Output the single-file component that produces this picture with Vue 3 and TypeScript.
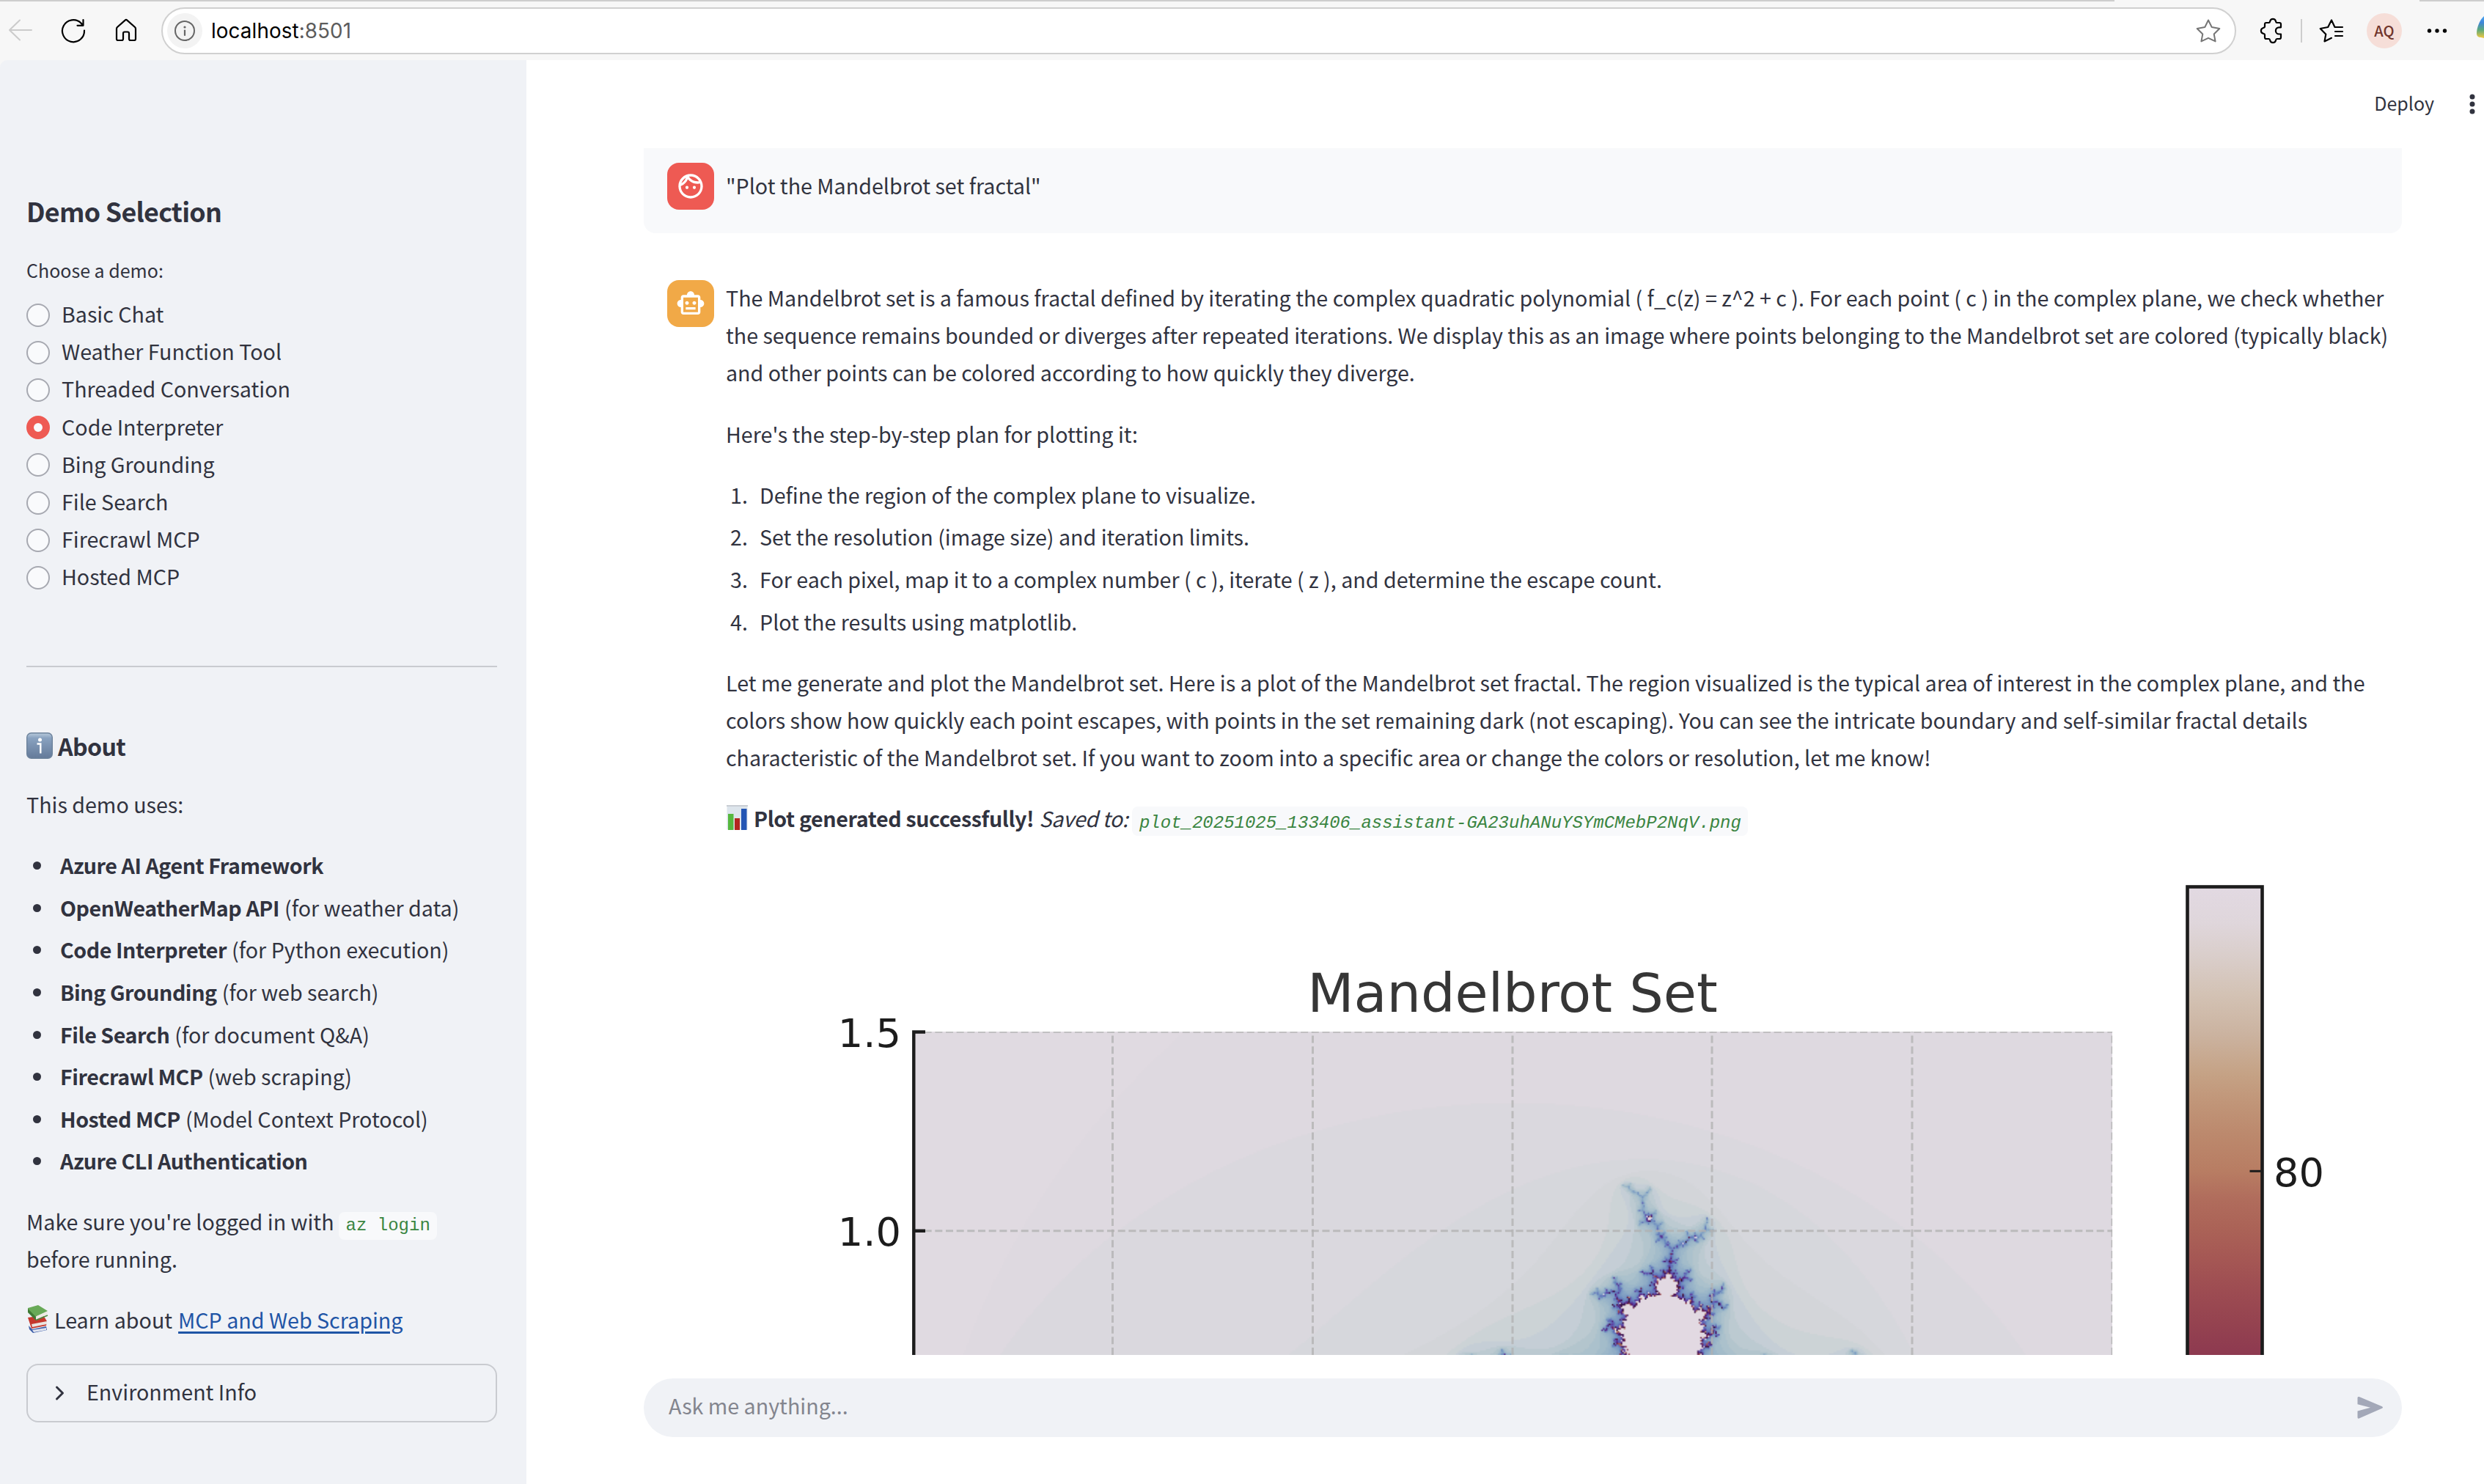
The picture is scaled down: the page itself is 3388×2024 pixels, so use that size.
<script setup lang="ts">
import { onMounted, ref } from 'vue'

interface Tool {
  name: string
  note: string
}

const demos: string[] = [
  'Basic Chat',
  'Weather Function Tool',
  'Threaded Conversation',
  'Code Interpreter',
  'Bing Grounding',
  'File Search',
  'Firecrawl MCP',
  'Hosted MCP',
]
const selected = ref('Code Interpreter')

const tools: Tool[] = [
  { name: 'Azure AI Agent Framework', note: '' },
  { name: 'OpenWeatherMap API', note: '(for weather data)' },
  { name: 'Code Interpreter', note: '(for Python execution)' },
  { name: 'Bing Grounding', note: '(for web search)' },
  { name: 'File Search', note: '(for document Q&A)' },
  { name: 'Firecrawl MCP', note: '(web scraping)' },
  { name: 'Hosted MCP', note: '(Model Context Protocol)' },
  { name: 'Azure CLI Authentication', note: '' },
]

const steps: string[] = [
  'Define the region of the complex plane to visualize.',
  'Set the resolution (image size) and iteration limits.',
  'For each pixel, map it to a complex number ( c ), iterate ( z ), and determine the escape count.',
  'Plot the results using matplotlib.',
]

/* Cyclic light-dark-light colormap, as [position, hex] stops */
const stops: [number, string][] = [
  [0, 'e2d9e2'], [0.01, 'e0dae1'], [0.02, 'ded9e0'], [0.03, 'dad8de'],
  [0.04, 'd6d7dc'], [0.05, 'd3d5d9'], [0.06, 'ccd3d6'], [0.07, 'c5ced6'],
  [0.08, 'bccad1'], [0.09, 'b3c5cd'], [0.111, 'a2bcca'], [0.16, '83a2c4'],
  [0.222, '6785be'], [0.28, '6066b5'], [0.333, '5e43a5'], [0.39, '552585'],
  [0.444, '421257'], [0.5, '2f1436'], [0.556, '471340'], [0.61, '701f4b'],
  [0.667, '8c3850'], [0.693, '954350'], [0.715, '9d4c52'], [0.7375, 'a55754'],
  [0.76, 'ab6357'], [0.779, 'b06c5c'], [0.8, 'b87d63'], [0.826, 'bc896d'],
  [0.849, 'c19679'], [0.868, 'c5a285'], [0.896, 'cbb3a0'], [0.924, 'd3c2b4'],
  [0.949, 'd9cdc9'], [0.974, 'dfd6db'], [1, 'e2d9e2'],
]

function channels(hex: string): number[] {
  return [0, 2, 4].map((i) => parseInt(hex.slice(i, i + 2), 16))
}

function colorAt(t: number): number[] {
  for (let i = 1; i < stops.length; i++) {
    if (t <= stops[i][0]) {
      const [a, from] = stops[i - 1]
      const [b, to] = stops[i]
      const k = (t - a) / (b - a)
      const p = channels(from)
      const q = channels(to)
      return p.map((v, j) => v + (q[j] - v) * k)
    }
  }
  return channels('e2d9e2')
}

const SIZE = 800
const ROWS = 216
const MAX_ITER = 100
const canvas = ref<HTMLCanvasElement | null>(null)

onMounted(() => {
  const ctx = canvas.value?.getContext('2d')
  if (!ctx) return
  const image = ctx.createImageData(SIZE, ROWS)
  const palette = Array.from({ length: MAX_ITER + 1 }, (_, n) => colorAt(n / MAX_ITER))
  for (let row = 0; row < ROWS; row++) {
    const ci = 1.5 - (3 * row) / (SIZE - 1)
    for (let col = 0; col < SIZE; col++) {
      const cr = -2 + (3 * col) / (SIZE - 1)
      let x = 0
      let y = 0
      let n = 0
      while (n < MAX_ITER && x * x + y * y <= 4) {
        const t = x * x - y * y + cr
        y = 2 * x * y + ci
        x = t
        n++
      }
      const [r, g, b] = palette[n]
      image.data.set([r, g, b, 255], (row * SIZE + col) * 4)
    }
  }
  ctx.putImageData(image, 0, 0)
})

const gridX: number[] = [1517.5, 1790.5, 2063, 2335, 2608]
const barStops: [number, string][] = stops
  .filter(([t]) => t >= 0.667)
  .map(([t, c]): [number, string] => [(1 - t) / 0.333, '#' + c])
  .reverse()
</script>

<template>
  <div class="window">
    <header class="toolbar">
      <svg class="nav" width="220" height="82" viewBox="0 0 220 82" fill="none">
        <g stroke="#cbcbcb" stroke-width="2" stroke-linecap="round" stroke-linejoin="round">
          <path d="M43 41H13M27 27.500L13 41L27 54.500" />
        </g>
        <g stroke="#000" stroke-width="2.200" stroke-linecap="round" stroke-linejoin="round">
          <path d="M115 41.500A15 15 0 1 1 110.500 31.500L113 34.500M113.500 27V34.800H105.500" />
          <path d="M170.600 27.600a2 2 0 0 1 2.800 0L184 37a3 3 0 0 1 1 2.200V53a2 2 0 0 1-2 2h-5a2 2 0 0 1-2-2v-7.500a2 2 0 0 0-2-2h-4a2 2 0 0 0-2 2V53a2 2 0 0 1-2 2h-5a2 2 0 0 1-2-2V39.200a3 3 0 0 1 1-2.200z" />
        </g>
      </svg>
      <div class="address">
        <span class="site-info">
          <svg width="48" height="48" viewBox="0 0 48 48" fill="none">
            <circle cx="24" cy="24" r="13" stroke="#666" stroke-width="2" />
            <path d="M24 23.500V30" stroke="#666" stroke-width="2.200" stroke-linecap="round" />
            <circle cx="24" cy="19" r="1.600" fill="#666" />
          </svg>
        </span>
        <span class="url">localhost<span class="port">:8501</span></span>
        <svg class="star" width="34" height="34" viewBox="2995 25 34 34" fill="none" stroke="#767676" stroke-width="2" stroke-linejoin="round">
          <path d="M3012 27.500L3016.700 37L3027.300 39L3019.700 46.500L3021.600 56.400L3012 51.800L3002.400 56.400L3004.300 46.500L2996.700 39L3007.300 37z" />
        </svg>
      </div>
      <svg class="actions" width="338" height="82" viewBox="3050 0 338 82" fill="none">
        <path d="M3091 31h3.500c1.500 0 1.500-1 1.700-2a4 4 0 0 1 7.800 0c.2 1 .2 2 1.700 2h3.300a2 2 0 0 1 2 2v4.300h-2.500a4.500 4.500 0 0 0 0 9.200h2.500V51a2 2 0 0 1-2 2h-3.300c-1.500 0-1.500 1-1.700 2a4 4 0 0 1-7.800 0c-.2-1-.2-2-1.700-2H3091a2 2 0 0 1-2-2v-3.500c0-1.500-1-1.500-2-1.700a4 4 0 0 1 0-7.800c1-.2 2-.2 2-1.700V33a2 2 0 0 1 2-2z" stroke="#000" stroke-width="2.200" stroke-linejoin="round" />
        <path d="M3139 26V58" stroke="#cdcdcd" stroke-width="2" />
        <g stroke="#000" stroke-width="2.200" stroke-linecap="round" stroke-linejoin="round">
          <path d="M3195 37H3184.500L3180 27.500L3175.200 37L3164.700 39L3172.300 46.800L3170.500 56.400L3180 51.800M3185 43H3195M3185 49H3195" />
        </g>
        <circle cx="3252" cy="42" r="24" fill="#f6ded8" />
        <text x="3252" y="49.500" text-anchor="middle" class="initials">AQ</text>
        <g fill="#000">
          <circle cx="3313.500" cy="42" r="2.700" />
          <circle cx="3324" cy="42" r="2.700" />
          <circle cx="3334.500" cy="42" r="2.700" />
        </g>
        <defs>
          <linearGradient id="assistantGlyph" x1="0" y1="0" x2="0" y2="1">
            <stop offset="0" stop-color="#4aa5f0" />
            <stop offset=".3" stop-color="#3f86d8" />
            <stop offset=".62" stop-color="#5ba97a" />
            <stop offset="1" stop-color="#f5c93f" />
          </linearGradient>
        </defs>
        <path d="M3388 22C3382 27 3378 38 3378 46Q3378 51 3384 51L3388 52z" fill="url(#assistantGlyph)" />
      </svg>
    </header>

    <div class="body">
      <aside class="sidebar">
        <h2>Demo Selection</h2>
        <div class="caption">Choose a demo:</div>
        <div class="radios">
          <label v-for="d in demos" :key="d" class="radio" @click="selected = d">
            <span class="dot" :class="{ on: d === selected }"></span>
            <span class="label">{{ d }}</span>
          </label>
        </div>
        <div class="rule"></div>
        <h3>
          <svg width="36" height="36" viewBox="0 0 36 36">
            <defs>
              <linearGradient id="infoTile" x1="0" y1="0" x2="0" y2="1">
                <stop offset="0" stop-color="#b9cbdc" />
                <stop offset=".2" stop-color="#89a2c0" />
                <stop offset="1" stop-color="#647a99" />
              </linearGradient>
            </defs>
            <rect x=".7" y=".7" width="34.600" height="34.600" rx="6" fill="url(#infoTile)" stroke="#6d839c" stroke-width="1.400" />
            <circle cx="18.500" cy="10" r="2.500" fill="#fff" />
            <path d="M14.500 15.500H19.300V28.500" fill="none" stroke="#fff" stroke-width="2.400" />
          </svg>
          <span>About</span>
        </h3>
        <p>This demo uses:</p>
        <ul class="tools">
          <li v-for="t in tools" :key="t.name"><b>{{ t.name }}</b> {{ t.note }}</li>
        </ul>
        <p>Make sure you're logged in with <code class="pale">az login</code><br />before running.</p>
        <p class="learn">
          <svg width="30" height="40" viewBox="0 0 30 40">
            <path d="M1 17L22 14L27 22L26 28L6 32z" fill="#c5372c" />
            <path d="M6 26L27 22L27 26L7 30z" fill="#e9e4e0" />
            <path d="M2 28L7 33L26 29L27 34L8 38L3 33z" fill="#3c5da8" />
            <path d="M7 34L26 31L26 34L9 37z" fill="#dfe3ee" />
            <path d="M1 4L15 0L28 8L11 16L1 8z" fill="#68a957" />
            <path d="M1 5L12 16L12 21L1 10z" fill="#3f7a35" />
            <path d="M12 15.500L28 8.500L27 13L12 20.500z" fill="#ece9e2" />
            <path d="M12 20.500L28 14" stroke="#4b8a3e" stroke-width="1.500" />
          </svg>
          Learn about <a>MCP and Web Scraping</a>
        </p>
        <div class="expander">
          <svg width="14" height="22" viewBox="0 0 14 22" fill="none" stroke="#31333f" stroke-width="3" stroke-linecap="round" stroke-linejoin="round">
            <path d="M2.500 3L10.500 11L2.500 19" />
          </svg>
          <span>Environment Info</span>
        </div>
      </aside>

      <main class="main">
        <div class="topline">
          <span>Deploy</span>
          <svg width="8" height="28" viewBox="0 0 8 28" fill="#31333f">
            <circle cx="4" cy="4" r="3.500" />
            <circle cx="4" cy="14" r="3.500" />
            <circle cx="4" cy="24" r="3.500" />
          </svg>
        </div>

        <section class="chat">
          <div class="message user">
            <span class="avatar red">
              <svg width="40" height="40" viewBox="0 0 24 24" fill="#fff">
                <path d="M10.250 13c0 .69-.56 1.250-1.250 1.250S7.750 13.690 7.750 13s.56-1.250 1.250-1.250 1.250.56 1.250 1.250zM15 11.750c-.69 0-1.250.56-1.250 1.250s.56 1.250 1.250 1.250 1.250-.56 1.250-1.250-.56-1.250-1.250-1.250zm7 .25c0 5.520-4.480 10-10 10S2 17.520 2 12 6.480 2 12 2s10 4.480 10 10zM10.660 4.120C12.060 6.440 14.600 8 17.500 8c.46 0 .91-.05 1.340-.12C17.440 5.560 14.900 4 12 4c-.46 0-.91.05-1.340.12zM4.420 9.470c1.710-.97 3.030-2.550 3.660-4.440C6.370 6 5.050 7.580 4.420 9.470zM20 12c0-.78-.12-1.530-.33-2.240-.7.15-1.420.24-2.170.24-3.130 0-5.920-1.440-7.760-3.690C8.690 8.870 6.600 10.880 4 11.860c.01.04 0 .09 0 .14 0 4.410 3.590 8 8 8s8-3.590 8-8z" />
              </svg>
            </span>
            <p>"Plot the Mandelbrot set fractal"</p>
          </div>

          <div class="message bot">
            <span class="avatar amber">
              <svg width="40" height="40" viewBox="0 0 24 24" fill="#fff">
                <path d="M20 9V7c0-1.100-.9-2-2-2h-3c0-1.660-1.340-3-3-3S9 3.340 9 5H6c-1.100 0-2 .9-2 2v2c-1.660 0-3 1.340-3 3s1.340 3 3 3v4c0 1.100.9 2 2 2h12c1.100 0 2-.9 2-2v-4c1.660 0 3-1.340 3-3s-1.340-3-3-3zm-2 10H6V7h12v12zm-9-6c-.83 0-1.500-.67-1.500-1.500S8.170 10 9 10s1.500.67 1.500 1.500S9.830 13 9 13zm7.500-1.500c0 .83-.67 1.500-1.500 1.500s-1.500-.67-1.500-1.500.67-1.500 1.500-1.500 1.500.67 1.500 1.500zM8 15h8v2H8v-2z" />
              </svg>
            </span>
            <div class="answer">
              <p>
                The Mandelbrot set is a famous fractal defined by iterating the complex quadratic polynomial ( f_c(z) = z^2 + c ). For each point ( c ) in the complex plane, we check whether<br />
                the sequence remains bounded or diverges after repeated iterations. We display this as an image where points belonging to the Mandelbrot set are colored (typically black)<br />
                and other points can be colored according to how quickly they diverge.
              </p>
              <p>Here's the step-by-step plan for plotting it:</p>
              <ol>
                <li v-for="(s, i) in steps" :key="i"><span class="num">{{ i + 1 }}.</span>{{ s }}</li>
              </ol>
              <p>
                Let me generate and plot the Mandelbrot set. Here is a plot of the Mandelbrot set fractal. The region visualized is the typical area of interest in the complex plane, and the<br />
                colors show how quickly each point escapes, with points in the set remaining dark (not escaping). You can see the intricate boundary and self-similar fractal details<br />
                characteristic of the Mandelbrot set. If you want to zoom into a specific area or change the colors or resolution, let me know!
              </p>
              <p class="saved">
                <svg width="29" height="34" viewBox="0 0 29 34">
                  <rect x=".5" y=".5" width="28" height="33" fill="#dde5ec" />
                  <rect x="0" y="0" width="29" height="2" fill="#c9ced4" />
                  <rect x="2" y="12" width="7.500" height="22" fill="#56b83f" />
                  <rect x="11" y="18" width="7" height="16" fill="#b3261f" />
                  <rect x="20" y="5" width="7.500" height="29" fill="#2456b4" />
                </svg>
                <b>Plot generated successfully!</b> <i>Saved to:</i>
                <code class="file">plot_20251025_133406_assistant-GA23uhANuYSYmCMebP2NqV.png</code>
              </p>
              <div class="figure">
                <canvas ref="canvas" :width="SIZE" :height="ROWS"></canvas>
                <svg width="2253" height="674" viewBox="991 1174 2253 674">
                  <defs>
                    <linearGradient id="bar" gradientUnits="userSpaceOnUse" x1="0" y1="1209" x2="0" y2="1854">
                      <stop v-for="([o, c], i) in barStops" :key="i" :offset="o" :stop-color="c" />
                    </linearGradient>
                  </defs>
                  <g stroke="#b0b0b0" stroke-opacity=".75" stroke-width="3" stroke-dasharray="10 4.670" fill="none">
                    <path v-for="x in gridX" :key="x" :d="`M${x} 1848V1407`" />
                    <path d="M1246 1678.800H2881" />
                    <path d="M1246 1407.800H2881M2880.300 1848V1407" stroke-width="1.700" />
                  </g>
                  <path d="M1246.300 1848V1407.500H1262M1246.300 1678.700H1262" fill="none" stroke="#1c1c1c" stroke-width="4.400" />
                  <rect x="2983.500" y="1209.500" width="102" height="700" fill="url(#bar)" stroke="#1c1c1c" stroke-width="4.600" />
                  <path d="M3068.500 1597.300H3084" stroke="#1c1c1c" stroke-width="3" />
                  <g class="plot-text">
                    <text x="2063" y="1380" text-anchor="middle" class="plot-title">Mandelbrot Set</text>
                    <text x="1229" y="1427.500" text-anchor="end">1.5</text>
                    <text x="1229" y="1699" text-anchor="end">1.0</text>
                    <text x="3101" y="1618">80</text>
                  </g>
                </svg>
              </div>
            </div>
          </div>
        </section>

        <div class="prompt">
          <span>Ask me anything...</span>
          <svg width="36" height="32" viewBox="0 0 36 32" fill="#a3a8b8">
            <path d="M.5 2.500Q.5.300 2.700 1.100L34 14.200Q36 15.500 34 16.800L2.700 30.500Q.5 31.300.5 29V20.500L18 15.700L.5 11.300z" />
          </svg>
        </div>
      </main>
    </div>
  </div>
</template>

<style>
html,
body {
  margin: 0;
  background: #fff;
}
</style>

<style scoped>
.window {
  width: 3388px;
  height: 2024px;
  overflow: hidden;
  display: flex;
  flex-direction: column;
  color: #31333f;
  font-family: 'Noto Sans CJK SC', 'Open Sans', sans-serif;
  font-size: 28.65px;
  line-height: 51.2px;
}
p,
h2,
h3,
ul,
ol {
  margin: 0;
  padding: 0;
  list-style: none;
  white-space: nowrap;
}
svg {
  display: block;
  flex: none;
}
.toolbar {
  height: 82px;
  flex: none;
  display: flex;
  background:
    linear-gradient(#cdcdcd, #cdcdcd) 0 0 / 2884px 2px no-repeat,
    linear-gradient(#cdcdcd, #cdcdcd) 100% 0 / 88px 2px no-repeat,
    #f7f7f7;
}
.address {
  box-sizing: border-box;
  width: 2830px;
  height: 64px;
  margin-top: 10px;
  padding: 0 19px 0 6px;
  border: 2px solid #d0d0d0;
  border-radius: 32px;
  background: #fff;
  display: flex;
  align-items: center;
}
.site-info {
  width: 48px;
  height: 48px;
  border-radius: 50%;
  background: #f3f3f3;
}
.url {
  margin-left: 12px;
  padding-top: 1px;
  flex: 1;
  color: #000;
  font-family: Inter, sans-serif;
  font-size: 27.8px;
  letter-spacing: 0.1px;
}
.port {
  color: #5c5c5c;
}
.initials {
  font-size: 20px;
  font-weight: 500;
  fill: #70342b;
}
.body {
  flex: 1;
  display: flex;
  background: #f7f7f7;
}
.sidebar {
  box-sizing: border-box;
  width: 718px;
  flex: none;
  padding: 181px 40px 0 36px;
  background: #f0f2f6;
  border-top-left-radius: 10px;
}
h2 {
  font-size: 35.8px;
  line-height: 48px;
  font-weight: 600;
  letter-spacing: -0.72px;
}
.caption {
  margin-top: 37px;
  font-size: 25px;
  line-height: 40px;
}
.radios {
  margin-top: 16px;
}
.radio {
  height: 51.2px;
  display: flex;
  align-items: center;
}
.dot {
  box-sizing: border-box;
  width: 32px;
  height: 32px;
  border: 2px solid #a7a9b1;
  border-radius: 50%;
  background: #f9fafc;
}
.dot.on {
  border: 10px solid #ee5a53;
}
.label {
  margin-left: 16px;
  padding-bottom: 4px;
}
.rule {
  height: 2px;
  margin-top: 94.5px;
  background: #c9cbd0;
}
h3 {
  display: flex;
  align-items: center;
  gap: 7px;
  margin-top: 83px;
  margin-bottom: 30px;
  font-size: 32.2px;
  line-height: 48px;
  font-weight: 600;
  letter-spacing: -0.7px;
}
b {
  font-weight: 600;
  letter-spacing: -0.45px;
}
.tools {
  margin: 32px 0 31px;
  display: flex;
  flex-direction: column;
  gap: 6.4px;
}
.tools li {
  display: flex;
  align-items: center;
  gap: 7px;
}
.tools li::before {
  content: '';
  width: 11px;
  height: 11px;
  margin: 2px 20px 0 9px;
  border-radius: 50%;
  background: #31333f;
}
.tools b {
  margin-left: -1px;
}
code {
  font-family: 'Liberation Mono', monospace;
  font-size: 24px;
  line-height: 30px;
  color: #3a8541;
  background: #f8f9fb;
  border-radius: 8px;
}
.pale {
  padding: 5px 9.6px 6px;
}
.learn {
  display: flex;
  margin-top: 32px;
  gap: 8px;
}
.learn svg {
  margin: 6px -1px 0 1px;
}
.learn a {
  color: #1f55a6;
  text-decoration: underline;
  text-decoration-thickness: 2.5px;
  text-underline-offset: 4px;
}
.expander {
  box-sizing: border-box;
  height: 80px;
  margin-top: 35px;
  padding-left: 37px;
  border: 2px solid #c9cbd0;
  border-radius: 16px;
  display: flex;
  align-items: center;
  gap: 29px;
}
.expander span {
  padding-bottom: 5px;
}
.main {
  flex: 1;
  display: flex;
  flex-direction: column;
  background: #fff;
}
.topline {
  height: 120px;
  flex: none;
  box-sizing: border-box;
  padding: 33px 12px 0 0;
  display: flex;
  justify-content: flex-end;
  gap: 48px;
  font-size: 25px;
}
.topline svg {
  margin-top: 13px;
}
.chat {
  width: 2398px;
  height: 1646px;
  flex: none;
  margin-left: 160px;
  overflow: hidden;
}
.message {
  box-sizing: border-box;
  padding: 0 32px;
  display: flex;
  gap: 16px;
}
.user {
  height: 116px;
  padding-top: 20px;
  background: #f8f9fb;
  border-radius: 0 0 16px 16px;
}
.user p {
  padding-top: 5px;
}
.bot {
  padding-top: 62px;
}
.avatar {
  width: 64px;
  height: 64px;
  flex: none;
  border-radius: 16px;
  display: flex;
  align-items: center;
  justify-content: center;
}
.red {
  background: #ee5a53;
}
.amber {
  margin-top: 2px;
  background: #f1a947;
}
.answer {
  display: flex;
  flex-direction: column;
  gap: 32px;
}
ol {
  display: flex;
  flex-direction: column;
  gap: 6.4px;
}
.num {
  display: inline-block;
  width: 40px;
  margin-left: 6px;
}
.saved {
  display: flex;
  align-items: center;
  gap: 7px;
  height: 51.2px;
}
.saved svg {
  margin: -2px 1px 0 1px;
}
.saved b {
  letter-spacing: -0.38px;
}
.saved i {
  letter-spacing: -0.3px;
}
.file {
  margin: 8px 0 0 -1px;
  padding: 8px 9.6px 2px;
  font-style: italic;
}
.figure {
  display: grid;
  width: 2253px;
  height: 674px;
  margin-left: 1px;
}
.figure > * {
  grid-area: 1 / 1;
}
.figure canvas {
  width: 1635px;
  height: 441.45px;
  margin: 233px 0 0 255px;
}
.figure svg {
  position: relative;
}
.plot-text {
  font-family: 'DejaVu Sans', sans-serif;
  font-size: 54.2px;
  fill: #1c1c1c;
}
.plot-title {
  font-size: 73.4px;
  fill: #363636;
}
.prompt {
  box-sizing: border-box;
  width: 2398px;
  height: 80px;
  margin: 32px 0 0 160px;
  padding: 0 25px 0 34px;
  border-radius: 40px;
  background: #f0f2f6;
  color: #83858e;
  display: flex;
  align-items: center;
  justify-content: space-between;
}
.prompt span {
  padding-bottom: 6px;
}
</style>
